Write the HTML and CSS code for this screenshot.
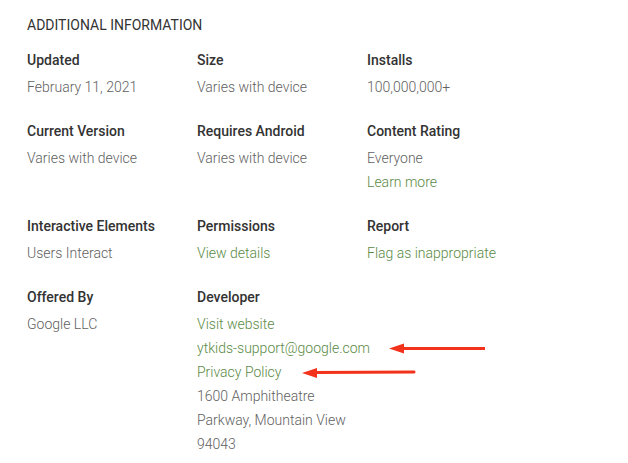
FILE: index.html
```html
<!DOCTYPE html>
<html>
<head>
<meta charset="utf-8">
<link rel="stylesheet" href="styles.css">
</head>
<body>
<div class="page">
  <h2 class="title">ADDITIONAL INFORMATION</h2>
  <div class="grid">
    <div class="cell"><div class="label">Updated</div><div class="value">February 11, 2021</div></div>
    <div class="cell"><div class="label">Size</div><div class="value">Varies with device</div></div>
    <div class="cell"><div class="label">Installs</div><div class="value">100,000,000+</div></div>

    <div class="cell"><div class="label">Current Version</div><div class="value">Varies with device</div></div>
    <div class="cell"><div class="label">Requires Android</div><div class="value">Varies with device</div></div>
    <div class="cell"><div class="label">Content Rating</div><div class="value">Everyone</div><div class="value link">Learn more</div></div>

    <div class="cell"><div class="label">Interactive Elements</div><div class="value">Users Interact</div></div>
    <div class="cell"><div class="label">Permissions</div><div class="value link">View details</div></div>
    <div class="cell"><div class="label">Report</div><div class="value link">Flag as inappropriate</div></div>

    <div class="cell"><div class="label">Offered By</div><div class="value">Google LLC</div></div>
    <div class="cell"><div class="label">Developer</div><div class="value link">Visit website</div><div class="value link">ytkids-support@google.com</div><div class="value link">Privacy Policy</div><div class="value">1600 Amphitheatre<br>Parkway, Mountain View<br>94043</div></div>
    <div class="cell"></div>
  </div>
  <svg class="arrows" width="628" height="463" viewBox="0 0 628 463">
    <line x1="401" y1="348.5" x2="485" y2="348.5" stroke="#f2321a" stroke-width="3"/>
    <polygon points="389,348.5 404,343.5 404,353.5" fill="#f2321a"/>
    <line x1="315" y1="372.5" x2="414" y2="372" stroke="#f2321a" stroke-width="3" stroke-linecap="round"/>
    <polygon points="302,373 317,368 317,378" fill="#f2321a"/>
  </svg>
</div>
</body>
</html>
```
FILE: styles.css
```css
html, body {
  margin: 0;
  padding: 0;
  background: #ffffff;
}
.page {
  position: relative;
  width: 628px;
  height: 463px;
  padding: 13px 0 0 27px;
  box-sizing: border-box;
  font-family: Roboto, "Liberation Sans", sans-serif;
  font-size: 14px;
}
.title {
  margin: 0 0 11px 0;
  font-size: 14px;
  font-weight: 400;
  line-height: 24px;
  color: #333333;
}
.grid {
  display: grid;
  grid-template-columns: 170px 170px 170px;
  row-gap: 20px;
}
.label {
  font-weight: 500;
  line-height: 24px;
  color: #333333;
  margin-bottom: 3px;
  white-space: nowrap;
}
.value {
  font-weight: 300;
  line-height: 24px;
  color: #616161;
  white-space: nowrap;
}
.value.link {
  color: #5a8a45;
}
.arrows {
  position: absolute;
  left: 0;
  top: 0;
  pointer-events: none;
}
```
